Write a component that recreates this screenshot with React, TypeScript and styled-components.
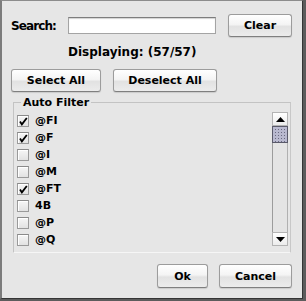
import React from "react";
import styled, { createGlobalStyle } from "styled-components";

const Global = createGlobalStyle`
  html, body {
    margin: 0;
    padding: 0;
    width: 306px;
    height: 301px;
    overflow: hidden;
    background: #5c5c5c;
  }
  body {
    font-family: "DejaVu Sans", "Liberation Sans", sans-serif;
    font-weight: bold;
    color: #000;
  }
`;

const Window = styled.div`
  box-sizing: border-box;
  width: 303px;
  height: 299px;
  background: #e6e6e6;
  border-top: 1px solid #8c8c8c;
  border-left: 2px solid #7c7c7c;
  border-right: 1px solid #353535;
  border-bottom: 1px solid #353535;
  padding: 13px 10px 0 9px;
  display: flex;
  flex-direction: column;
`;

const SearchRow = styled.div`
  display: flex;
  align-items: center;
  height: 23px;
`;

const Label = styled.span`
  width: 57px;
  font-size: 12px;
  line-height: 14px;
  letter-spacing: -0.9px;
`;

const TextField = styled.input`
  box-sizing: border-box;
  width: 148px;
  height: 17px;
  margin: 0;
  padding: 0 3px;
  border: 1px solid #a4a4a4;
  border-top-color: #7d7d7d;
  background: #fff;
  box-shadow: inset 0 1px 1px rgba(0, 0, 0, 0.18);
  outline: none;
`;

const Button = styled.button<{ $w: number; $h?: number }>`
  box-sizing: border-box;
  width: ${(p) => p.$w}px;
  height: ${(p) => p.$h ?? 23}px;
  margin: 0;
  padding: 0;
  border: 1px solid #9c9c9c;
  border-bottom-color: #7f7f7f;
  border-radius: 3px;
  background: linear-gradient(#ffffff 0%, #f4f4f4 45%, #e2e2e2 55%, #ececec 100%);
  box-shadow: 0 1px 1px rgba(0, 0, 0, 0.12);
  font-family: "DejaVu Sans", "Liberation Sans", sans-serif;
  font-weight: bold;
  font-size: 11px;
  line-height: 13px;
  color: #000;
`;

const ClearButton = styled(Button)`
  margin-left: 12px;
`;

const Displaying = styled.div`
  margin: 8px 0 0 57px;
  font-size: 12px;
  line-height: 14px;
`;

const ButtonRow = styled.div`
  display: flex;
  gap: 12px;
  margin-top: 10px;
`;

const Group = styled.fieldset`
  box-sizing: border-box;
  width: 278px;
  height: 157px;
  margin: 4px 0 0 2px;
  padding: 3px 2px 0 3px;
  border: 1px solid #c3c3c3;
  border-bottom-color: #f6f6f6;
  border-right-color: #c8c8c8;
  display: flex;
  min-width: 0;
`;

const Legend = styled.legend`
  margin-left: 4px;
  padding: 0 2px;
  font-size: 11px;
  line-height: 13px;
`;

const List = styled.div`
  flex: 1;
  display: flex;
  flex-direction: column;
`;

const Row = styled.div`
  display: flex;
  align-items: center;
  height: 17px;
  gap: 6px;
  font-size: 11px;
`;

const Box = styled.span`
  box-sizing: border-box;
  width: 12px;
  height: 12px;
  border: 1px solid #9a9a9a;
  border-top-color: #8a8a8a;
  background: linear-gradient(#f6f6f6, #e2e2e2);
  box-shadow: inset 1px 1px 0 #fff;
  display: flex;
  align-items: center;
  justify-content: center;
`;

const ScrollBar = styled.div`
  width: 16px;
  height: 134px;
  display: flex;
  flex-direction: column;
`;

const Arrow = styled.div`
  box-sizing: border-box;
  height: 14px;
  border: 1px solid #b4b4b4;
  background: linear-gradient(#ffffff, #ececec);
  display: flex;
  align-items: center;
  justify-content: center;
`;

const Thumb = styled.div`
  box-sizing: border-box;
  height: 17px;
  border: 1px solid #5a5a6a;
  background-color: #b9b9cf;
  background-image: radial-gradient(circle, #6a6a80 0.7px, transparent 0.9px);
  background-size: 3px 3px;
  background-position: 1px 1px;
`;

const Track = styled.div`
  flex: 1;
  box-sizing: border-box;
  border-left: 1px solid #9c9c9c;
  border-right: 1px solid #b0b0b0;
  background: #e4e4e4;
`;

const Footer = styled.div`
  display: flex;
  justify-content: flex-end;
  gap: 11px;
  margin-top: 11px;
`;

const items: [string, boolean][] = [
  ["@FI", true],
  ["@F", true],
  ["@I", false],
  ["@M", false],
  ["@FT", true],
  ["4B", false],
  ["@P", false],
  ["@Q", false],
];

const Check = () => (
  <svg width="10" height="10" viewBox="0 0 10 10">
    <path d="M2 5.4 L3.9 8.4 L8.8 2" fill="none" stroke="#000" strokeWidth="1.8" />
  </svg>
);

export default function App() {
  return (
    <>
      <Global />
      <Window>
        <SearchRow>
          <Label>Search:</Label>
          <TextField />
          <ClearButton $w={64}>Clear</ClearButton>
        </SearchRow>
        <Displaying>Displaying: (57/57)</Displaying>
        <ButtonRow>
          <Button $w={90}>Select All</Button>
          <Button $w={104}>Deselect All</Button>
        </ButtonRow>
        <Group>
          <Legend>Auto Filter</Legend>
          <List>
            {items.map(([name, on]) => (
              <Row key={name}>
                <Box>{on && <Check />}</Box>
                {name}
              </Row>
            ))}
          </List>
          <ScrollBar>
            <Arrow>
              <svg width="9" height="5" viewBox="0 0 9 5">
                <path d="M0 5 L4.5 0 L9 5 Z" fill="#000" />
              </svg>
            </Arrow>
            <Thumb />
            <Track />
            <Arrow>
              <svg width="9" height="5" viewBox="0 0 9 5">
                <path d="M0 0 L9 0 L4.5 5 Z" fill="#000" />
              </svg>
            </Arrow>
          </ScrollBar>
        </Group>
        <Footer>
          <Button $w={51} $h={24}>Ok</Button>
          <Button $w={73} $h={24}>Cancel</Button>
        </Footer>
      </Window>
    </>
  );
}
